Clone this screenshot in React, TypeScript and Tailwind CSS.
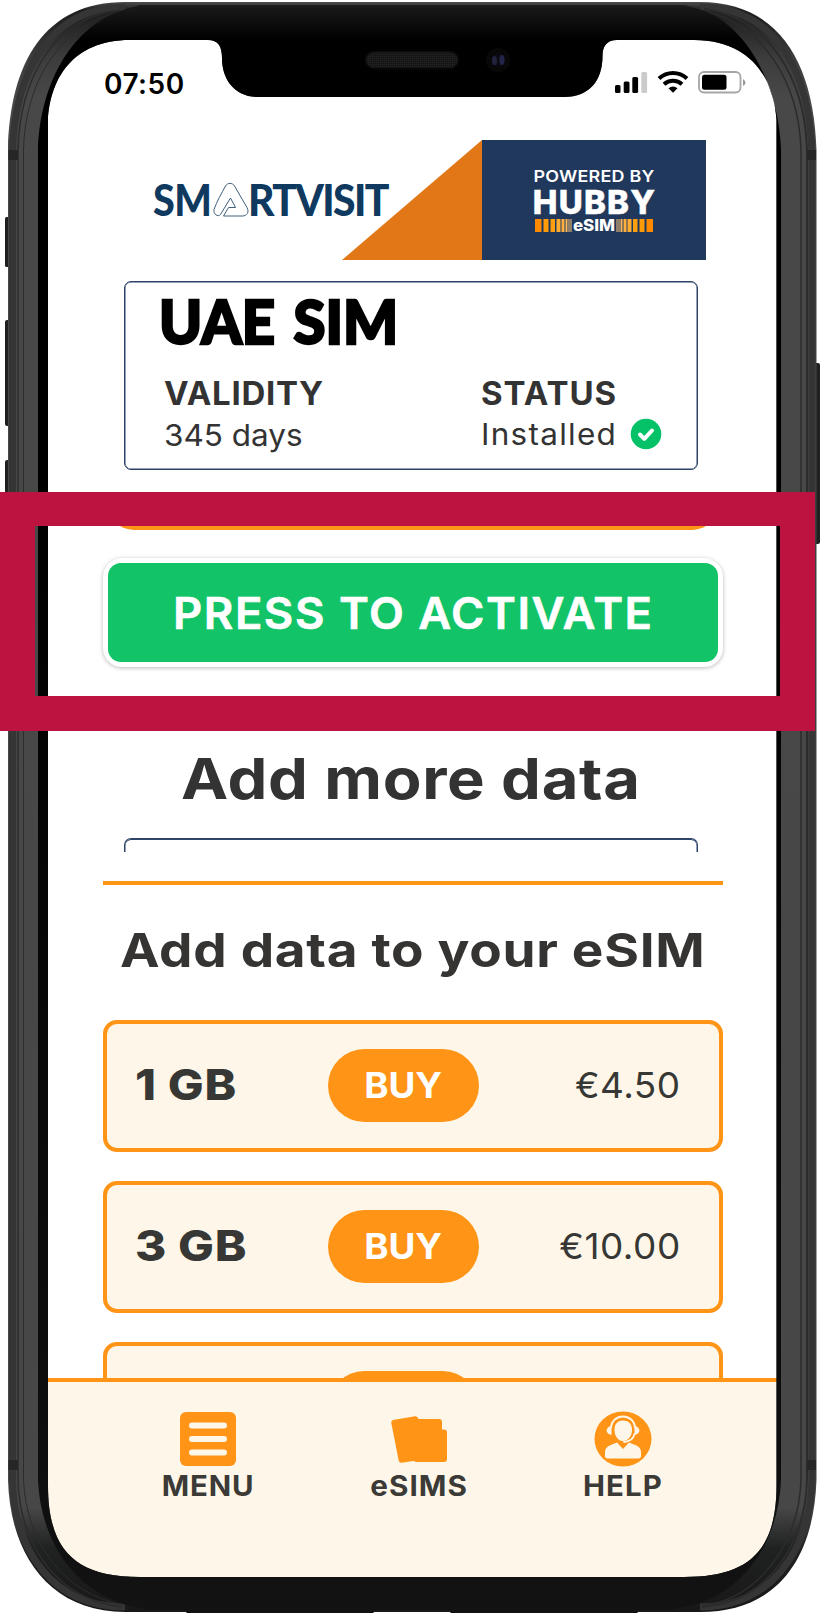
import React from "react";

const plans = [
  { size: "1 GB", price: "€4.50" },
  { size: "3 GB", price: "€10.00" },
];

function PhoneFrame() {
  return (
    <svg className="pointer-events-none absolute left-0 top-0" width="828" height="1621" viewBox="0 0 828 1621">
      <defs>
        <linearGradient id="metal" x1="0" x2="0" y1="0" y2="1621" gradientUnits="userSpaceOnUse">
          <stop offset="0" stopColor="#5a5a5a" />
          <stop offset="0.006" stopColor="#202020" />
          <stop offset="0.012" stopColor="#222" />
          <stop offset="0.035" stopColor="#3c3c3c" />
          <stop offset="0.06" stopColor="#484848" />
          <stop offset="0.93" stopColor="#474747" />
          <stop offset="0.955" stopColor="#202121" />
          <stop offset="1" stopColor="#161616" />
        </linearGradient>
        <linearGradient id="bezel" x1="0" x2="0" y1="0" y2="1621" gradientUnits="userSpaceOnUse">
          <stop offset="0" stopColor="#242424" />
          <stop offset="0.006" stopColor="#171717" />
          <stop offset="0.025" stopColor="#000" />
          <stop offset="0.3" stopColor="#000" />
          <stop offset="0.9" stopColor="#0e0e0e" />
          <stop offset="1" stopColor="#131313" />
        </linearGradient>
        <pattern id="mesh" width="2" height="2" patternUnits="userSpaceOnUse">
          <rect width="2" height="2" fill="#161616" />
          <rect width="1" height="1" fill="#252525" />
        </pattern>
      </defs>
      <g fill="#202020">
        <rect x="5" y="217" width="5" height="50" rx="1.500" />
        <rect x="5" y="320" width="5" height="106" rx="2" />
        <rect x="5" y="460" width="5" height="106" rx="2" />
        <rect x="814" y="363" width="6" height="181" rx="2" />
      </g>
      <path
        fill="url(#metal)"
        fillRule="evenodd"
        d="M8 150C10 62 45 2 125 2H700C778 2 814 62 816.500 150V1480C814 1555 780 1612 700 1612H125C50 1612 10 1555 8 1480Z M48 120V1485C48 1550 75 1577 140 1577H684C750 1577 776.500 1550 776.500 1485V120C774 80 752 40 694 40H617C607 40 602.500 46 602.500 56C602.500 80 590 97 564 97H258C235 97 222 80 222 58C222 46 218 40 208 40H130C72 40 50 80 48 120Z"
      />
      <g fill="none" stroke="#2c2c2c">
        <path strokeWidth="7" stroke="#353535" d="M12.500 155C14 72 50 7 125 7M12.500 150V1480C14 1552 54 1607 125 1607" />
        <path strokeWidth="7" stroke="#353535" d="M812 155C810 72 776 7 700 7M812 150V1480C810 1552 770 1607 700 1607" />
        <path strokeWidth="1.500" d="M18 150C20 78 54 17 120 10M18 150V1480C20 1545 57 1600 122 1607" />
        <path strokeWidth="1" d="M23.500 150C25 84 58 27 118 12M23.500 150V1480C26 1540 62 1594 124 1605" />
        <path strokeWidth="1.500" d="M801 150C799 84 764 24 704 11M801 150V1480C799 1540 762 1598 702 1606" />
        <path strokeWidth="2" d="M807 150C805 80 770 17 704 9M807 150V1480C805 1545 768 1602 702 1607" />
      </g>
      <path
        fill="url(#bezel)"
        fillRule="evenodd"
        d="M38 150C40 88 68 30 120 11L140 5H685L705 11C750 30 779 88 781 150V1480C779 1535 750 1590 690 1606L670 1610H150L130 1606C70 1590 40 1535 38 1480Z M48 120V1485C48 1550 75 1577 140 1577H684C750 1577 776.500 1550 776.500 1485V120C774 80 752 40 694 40H617C607 40 602.500 46 602.500 56C602.500 80 590 97 564 97H258C235 97 222 80 222 58C222 46 218 40 208 40H130C72 40 50 80 48 120Z"
      />
      <g fill="#262626">
        <rect x="8.500" y="150" width="9.500" height="10" />
        <rect x="807" y="150" width="9" height="10" />
        <rect x="8.500" y="1460" width="9.500" height="10" />
        <rect x="807" y="1460" width="9" height="10" />
      </g>
      <rect x="186" y="1610" width="188" height="3" rx="1.500" fill="#111" />
      <rect x="450" y="1610" width="188" height="3" rx="1.500" fill="#111" />
      <rect x="365.500" y="51.500" width="93" height="17" rx="8.500" fill="url(#mesh)" stroke="#0a0a0a" strokeWidth="1.500" />
      <circle cx="498" cy="60" r="12" fill="#080809" />
      <circle cx="498" cy="60" r="7" fill="#0b0b12" />
      <ellipse cx="494.500" cy="60.500" rx="2.500" ry="4.500" fill="#22223f" />
      <ellipse cx="502" cy="60" rx="2.500" ry="5" fill="#25254a" />
    </svg>
  );
}

function StatusIcons() {
  return (
    <svg width="134" height="26" viewBox="0 0 134 26">
      <rect x="1" y="15" width="5.500" height="8" rx="1.500" />
      <rect x="9.700" y="11.500" width="5.800" height="11.500" rx="1.500" />
      <rect x="18.300" y="7" width="5.800" height="16" rx="1.500" />
      <rect x="27.300" y="2" width="5.800" height="21" rx="1.500" fill="#cbcbcb" />
      <g fill="none" stroke="#000" strokeWidth="4">
        <path d="M45 8.500C53 1 65 1 73 8.500" />
        <path d="M50 14.200C55 9.500 63 9.500 68 14.200" />
      </g>
      <path d="M54.500 18.200Q59 15 63.500 18.200L59 22.800Z" />
      <rect x="85" y="2" width="41.500" height="20.500" rx="5" fill="none" stroke="#a6a6a6" strokeWidth="1.800" />
      <rect x="88" y="4.800" width="24.500" height="15" rx="2.500" />
      <path d="M129 9Q131.500 10.500 131.500 12.500Q131.500 14.500 129 16Z" fill="#999" />
    </svg>
  );
}

function SmartVisitLogo() {
  return (
    <div className="flex h-[120px] w-[236px] items-center font-['Lato'] text-[43px] font-black leading-[120px] text-[#0f395e]">
      <span className="inline-block w-[59px] origin-left scale-x-[0.92] whitespace-nowrap tracking-[-0.500px]">SM</span>
      <svg className="mt-[-1px] shrink-0" width="37" height="36" viewBox="0 0 37 36" fill="none" stroke="#3f607e" strokeWidth="1">
        <path d="M13.500 4C15.500.5 20.500.5 22.500 4L35 25.500C37.500 30 35 34 30.500 34H11.500L16.500 25.500H23.500L18.500 16L8.500 32.500C6 35.500 1 32 2 27.500C5 19 9.500 11.500 13.500 4Z" />
      </svg>
      <span className="-ml-px inline-block origin-left scale-x-[0.95] whitespace-nowrap tracking-[-1.700px]">RTVISIT</span>
    </div>
  );
}

const leftBars = [
  [0, 6.5, "#ff8a00"],
  [8.5, 5, "#ff9a08"],
  [15.5, 4.5, "#ff9f10"],
  [21.5, 4, "#ffac33"],
  [26.5, 3, "#ffb040"],
  [30.5, 2, "#ffb95a"],
  [33.5, 1, "#ffc477"],
  [35.5, 1, "#ffc477"],
] as const;

function Bars({ flip }: { flip?: boolean }) {
  return (
    <svg width="37" height="13" viewBox="0 0 37 13" className={flip ? "shrink-0 -scale-x-100" : "shrink-0"}>
      {leftBars.map(([x, w, c]) => (
        <rect key={x} x={x} y="0" width={w} height="13" fill={c} />
      ))}
    </svg>
  );
}

function BrandHeader() {
  return (
    <div className="flex h-[120px] pl-[105px]">
      <SmartVisitLogo />
      <svg className="-ml-[47px] shrink-0" width="140" height="120" viewBox="0 0 140 120">
        <path d="M0 120L140 0V120Z" fill="#e17716" />
      </svg>
      <div className="flex w-[224px] shrink-0 flex-col items-center bg-[#1f385c] pl-px pt-[28px] text-white">
        <div className="scale-x-[1.12] whitespace-nowrap text-base font-semibold leading-4 tracking-[0.200px]">POWERED BY</div>
        <div className="mt-[2px] whitespace-nowrap text-[33px] font-extrabold leading-8 tracking-[1.200px] [-webkit-text-stroke:0.5px_#fff]">HUBBY</div>
        <div className="mt-px flex h-[13px] items-center pr-px">
          <Bars />
          <span className="inline-block w-[44px] scale-x-[1.06] text-center text-base font-extrabold leading-[13px]">eSIM</span>
          <Bars flip />
        </div>
      </div>
    </div>
  );
}

function SimCard() {
  return (
    <section className="ml-[76px] mt-[21px] h-[189px] w-[574px] shrink-0 rounded-[7px] border border-[#2c4468] text-[#333] shadow-[inset_0_0_0_0.5px_#2c4468]">
      <h1 className="ml-[34px] mt-[8px] whitespace-nowrap font-['Lato'] text-[61px] font-black leading-[62px] text-black">
        <span className="inline-block origin-left scale-x-[0.95] [word-spacing:5px] [-webkit-text-stroke:2.5px_#000]">UAE SIM</span>
      </h1>
      <div className="mt-[22px] flex pl-[39px]">
        <div className="w-[317px]">
          <div className="origin-left scale-x-[1.03] text-[32px] font-bold leading-[40px] tracking-[0.700px]">VALIDITY</div>
          <div className="mt-[1px] origin-left scale-x-[1.05] text-[30px] leading-[40px]">345 days</div>
        </div>
        <div>
          <div className="origin-left scale-x-[1.03] text-[32px] font-bold leading-[40px] tracking-[1px]">STATUS</div>
          <div className="flex items-center">
            <span className="w-[149px] shrink-0">
              <span className="inline-block origin-left scale-x-[1.05] text-[30px] leading-[40px] tracking-[1.200px]">Installed</span>
            </span>
            <svg className="shrink-0" width="32" height="32" viewBox="0 0 32 32">
              <circle cx="16" cy="16" r="15.300" fill="#05c168" />
              <path d="M10 16.500L14.300 20.800L22 12.500" fill="none" stroke="#fff" strokeWidth="4" strokeLinecap="round" strokeLinejoin="round" />
            </svg>
          </div>
        </div>
      </div>
    </section>
  );
}

function PlanRow({ size, price }: { size: string; price: string }) {
  return (
    <div className="mb-[29px] ml-[55px] flex h-[132px] w-[620px] shrink-0 rounded-[14px] border-4 border-[#ff9416] bg-[#fef7e9] pl-[28px] pr-[38px] pt-[25px] text-[#373735]">
      <div className="w-[193px]">
        <span className="mt-[10px] inline-block origin-left scale-x-[1.11] whitespace-nowrap text-[43px] font-extrabold leading-[50px] tracking-[0.600px]">{size}</span>
      </div>
      <button className="h-[73px] w-[151px] rounded-full bg-[#ff9416] text-[35px] font-bold leading-[73px] text-white">
        <span className="inline-block scale-x-[1.05]">BUY</span>
      </button>
      <div className="ml-auto mt-[12px] origin-right scale-x-[1.04] whitespace-nowrap text-[35.500px] leading-[50px] tracking-[0.500px]">{price}</div>
    </div>
  );
}

function MenuIcon() {
  return (
    <svg width="58" height="58" viewBox="0 0 58 58">
      <rect x="1" y="2" width="56" height="54" rx="6" fill="#ff9416" />
      <path d="M13 15.500H45M13 29H45M13 42.500H45" stroke="#fef7e9" strokeWidth="6" strokeLinecap="round" />
    </svg>
  );
}

function CardsIcon() {
  return (
    <svg width="58" height="58" viewBox="0 0 58 58" fill="#ff9416">
      <path d="M3 10L25 6.200Q27.500 5.800 28.500 9H49Q52 9 52 12V19.500H54Q57 19.500 57 22.500V49Q57 52 54 52H25.500Q24.500 50.500 23 51L12 52.700Q9.200 53 8.700 50.500L1.300 13Q1 10.500 3 10Z" />
    </svg>
  );
}

function HelpIcon() {
  return (
    <svg width="58" height="58" viewBox="0 0 58 58">
      <ellipse cx="29" cy="29" rx="28.500" ry="27.500" fill="#ff9416" />
      <g fill="#fef7e9">
        <path d="M29 10.500C35 10.500 38 14.500 38 20C38 26 34 31 29 31C24 31 20.500 26 20.500 20C20.500 14.500 23 10.500 29 10.500Z" />
        <path d="M17.500 15.500V25Q13 24 12.500 20.500Q13 17 17.500 15.500ZM40.500 15.500V25Q45 24 45.500 20.500Q45 17 40.500 15.500Z" />
        <path d="M23 32.500L29 39L35 32.500L42.500 35.500Q47 37.500 47 42V46Q47 48.500 44.500 48.500H13.500Q11 48.500 11 46V42Q11 37.500 15.500 35.500Z" />
      </g>
      <g fill="none" stroke="#fef7e9" strokeWidth="2">
        <path d="M17 18C18 2.500 40 2.500 41 18" />
        <path d="M40.500 24C39.500 28.500 36 31.500 30 32" strokeWidth="1.800" strokeLinecap="round" />
      </g>
    </svg>
  );
}

function BottomNav() {
  const item = "flex w-[120px] flex-col items-center text-[28px] font-bold leading-[34px] text-[#3b3a37]";
  return (
    <nav className="absolute bottom-0 left-0 flex h-[199px] w-full border-t-4 border-[#ff9416] bg-[#fef7e9] pl-[100px] pt-[28px]">
      <div className={item}>
        <MenuIcon />
        <span className="mt-px scale-x-[1.05] tracking-[0.800px]">MENU</span>
      </div>
      <div className={item + " ml-[91px]"}>
        <CardsIcon />
        <span className="mt-px scale-x-[1.06] tracking-[1px]">eSIMS</span>
      </div>
      <div className={item + " ml-[84px]"}>
        <HelpIcon />
        <span className="mt-px scale-x-[1.05] tracking-[1px]">HELP</span>
      </div>
    </nav>
  );
}

export default function App() {
  return (
    <div className="relative h-[1621px] w-[828px] overflow-hidden bg-white pl-12 pt-10 font-['Inter',sans-serif]">
      <main className="relative flex h-[1537px] w-[729px] flex-col overflow-hidden bg-white">
        <div className="flex h-[100px] shrink-0 items-start justify-between pl-[56px] pr-[29px] pt-[30px]">
          <div className="mt-px text-[28px] font-semibold leading-[27px] tracking-[0.500px]">07:50</div>
          <StatusIcons />
        </div>
        <BrandHeader />
        <SimCard />
        <div className="ml-[58px] mt-[20px] h-[40px] w-[614px] shrink-0 rounded-b-[28px] border-b-4 border-[#ff9416]" />
        <button className="ml-[55px] mt-[28px] h-[109px] w-[620px] shrink-0 rounded-[19px] border-[5px] border-white bg-white shadow-[0_1px_4px_rgba(0,0,0,0.28)]">
          <span className="block h-[99px] w-[610px] rounded-[13px] bg-[#12c367] text-[44px] font-semibold leading-[100px] text-white">
            <span className="inline-block scale-x-[1.03] whitespace-nowrap tracking-[1.500px] [-webkit-text-stroke:0.6px_#fff]">PRESS TO ACTIVATE</span>
          </span>
        </button>
        <h2 className="mt-[79px] shrink-0 pl-[133px] text-[56px] font-bold leading-[66px] text-[#333]">
          <span className="inline-block origin-left scale-x-[1.13] whitespace-nowrap tracking-[0.600px]">Add more data</span>
        </h2>
        <div className="ml-[76px] mt-[26px] h-[14px] w-[574px] shrink-0 rounded-t-[7px] border-x border-t border-[#2c4468] shadow-[inset_0_0.5px_0_0.5px_#2c4468]" />
        <div className="ml-[55px] mt-[29px] h-[4px] w-[620px] shrink-0 bg-[#ff9416]" />
        <h3 className="mt-[36px] shrink-0 pl-[72px] text-[47px] font-bold leading-[58px] text-[#353433]">
          <span className="inline-block origin-left scale-x-[1.13] whitespace-nowrap tracking-[0.600px]">Add data to your eSIM</span>
        </h3>
        <div className="mt-[41px] flex flex-col">
          {plans.map((p) => (
            <PlanRow key={p.size} {...p} />
          ))}
          <div className="ml-[55px] h-[132px] w-[620px] shrink-0 rounded-[14px] border-4 border-[#ff9416] bg-[#fef7e9] pl-[221px] pt-[25px]">
            <div className="h-[73px] w-[151px] rounded-full bg-[#ff9416]" />
          </div>
        </div>
        <BottomNav />
      </main>
      <PhoneFrame />
      <div className="absolute left-0 top-[492px] h-[239px] w-[815px] border-x-[35px] border-b-[35px] border-t-[34px] border-[#bc1341]" />
    </div>
  );
}
